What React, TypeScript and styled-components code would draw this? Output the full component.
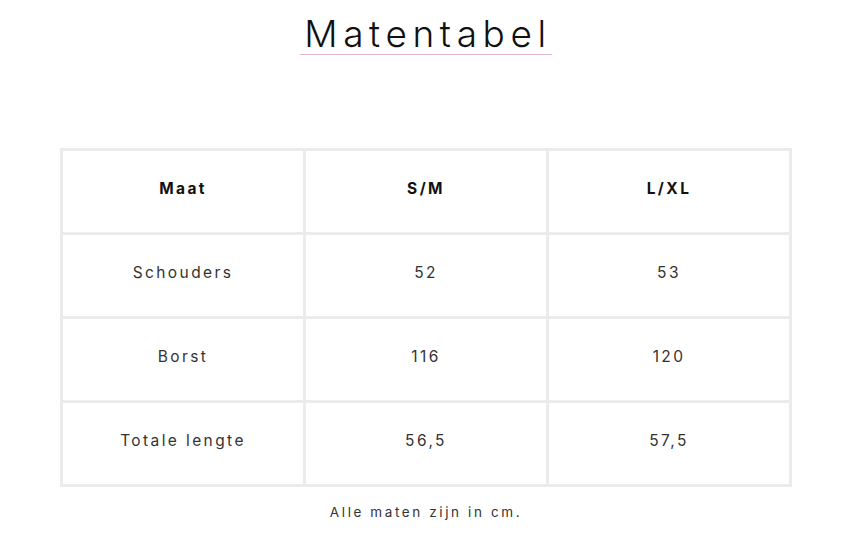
import React from "react";
import styled, { createGlobalStyle } from "styled-components";

const GlobalStyle = createGlobalStyle`
  html, body {
    margin: 0;
    padding: 0;
    background: #ffffff;
  }
  body {
    font-family: Inter, "Open Sans", sans-serif;
    color: #1a1a1a;
  }
`;

const Page = styled.div`
  width: 862px;
  height: 548px;
  box-sizing: border-box;
  padding: 13px 70px 0 60px;
  display: flex;
  flex-direction: column;
  align-items: center;
`;

const Title = styled.h1`
  margin: 0;
  font-size: 37px;
  font-weight: 300;
  letter-spacing: 5.6px;
  line-height: 41px;
  padding: 0 0 0 4px;
  border-bottom: 1px solid #e2b4cc;
  color: #111;
`;

const Table = styled.table`
  margin-top: 93px;
  width: 732px;
  border-collapse: collapse;
  table-layout: fixed;
`;

const Cell = styled.td<{ $head?: boolean }>`
  height: 75px;
  border: 3px solid #ebebeb;
  text-align: center;
  vertical-align: middle;
  padding: 0 0 6px;
  font-size: 15.5px;
  letter-spacing: 2.4px;
  font-weight: ${(p) => (p.$head ? 700 : 400)};
  color: ${(p) => (p.$head ? "#111" : "#333")};
`;

const Note = styled.p`
  margin: 17px 0 0;
  font-size: 13.5px;
  letter-spacing: 2.6px;
  color: #333;
`;

const rows = [
  ["Schouders", "52", "53"],
  ["Borst", "116", "120"],
  ["Totale lengte", "56,5", "57,5"],
];

export default function App() {
  return (
    <>
      <GlobalStyle />
      <Page>
        <Title>Matentabel</Title>
        <Table>
          <thead>
            <tr>
              <Cell as="th" $head>Maat</Cell>
              <Cell as="th" $head>S/M</Cell>
              <Cell as="th" $head>L/XL</Cell>
            </tr>
          </thead>
          <tbody>
            {rows.map((r) => (
              <tr key={r[0]}>
                {r.map((c, i) => (
                  <Cell key={i}>{c}</Cell>
                ))}
              </tr>
            ))}
          </tbody>
        </Table>
        <Note>Alle maten zijn in cm.</Note>
      </Page>
    </>
  );
}
